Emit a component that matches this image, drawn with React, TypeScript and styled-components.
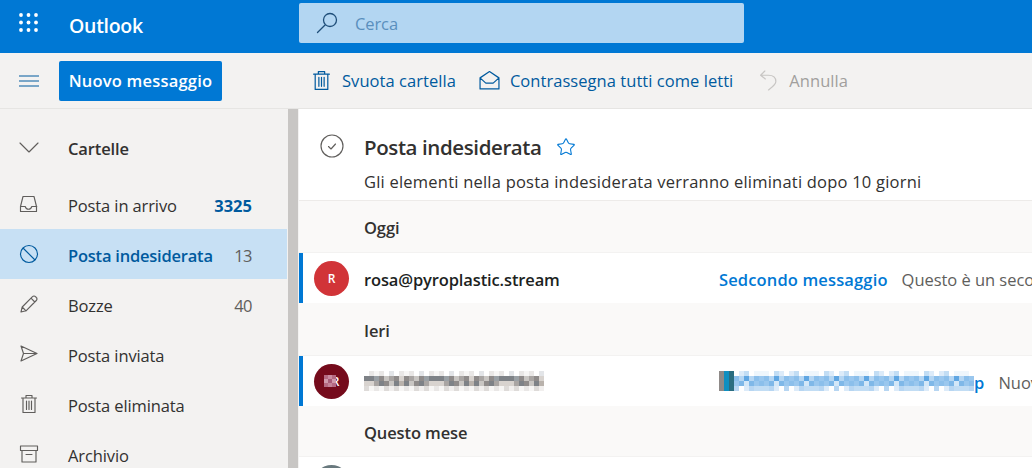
import React from "react";
import styled, { createGlobalStyle } from "styled-components";
import { Star } from "lucide-react";

const GlobalStyle = createGlobalStyle`
  html, body {
    margin: 0;
    padding: 0;
    width: 1032px;
    height: 468px;
    overflow: hidden;
    font-family: "Open Sans", "Liberation Sans", sans-serif;
  }
  * { box-sizing: border-box; }
`;

const Page = styled.div`
  width: 1032px;
  height: 468px;
  display: flex;
  flex-direction: column;
  overflow: hidden;
  background: #fff;
`;

const Header = styled.header`
  height: 53px;
  flex: none;
  background: #0078d4;
  display: flex;
  align-items: flex-start;
`;

const Waffle = styled.div`
  width: 69px;
  flex: none;
  padding: 13px 0 0 19px;
  svg { display: block; }
`;

const Brand = styled.div`
  width: 230px;
  flex: none;
  color: #fff;
  font-size: 19.5px;
  font-weight: 600;
  letter-spacing: -0.3px;
  line-height: 26px;
  padding-top: 13px;
`;

const Search = styled.div`
  width: 445px;
  height: 40px;
  margin-top: 3px;
  border-radius: 2px;
  background: #b3d6f2;
  display: flex;
  align-items: center;
  gap: 17px;
  padding-left: 17px;
  color: #5a8fbd;
  font-size: 16.5px;
  letter-spacing: -0.1px;
`;

const Toolbar = styled.div`
  height: 56px;
  flex: none;
  background: #f3f2f1;
  border-bottom: 1px solid #e6e5e3;
  display: flex;
  align-items: center;
`;

const ToolbarLeft = styled.div`
  width: 299px;
  flex: none;
  display: flex;
  align-items: center;
  padding-left: 19px;
  gap: 20px;
`;

const NewButton = styled.button`
  width: 163px;
  height: 40px;
  border: 0;
  border-radius: 2px;
  background: #0078d4;
  color: #fff;
  font: 600 16.5px "Open Sans", sans-serif;
  letter-spacing: 0.2px;
  padding: 0;
`;

const Actions = styled.div`
  display: flex;
  align-items: center;
  padding-left: 12px;
`;

const Action = styled.div<{ $disabled?: boolean; $gap?: number }>`
  display: flex;
  align-items: center;
  gap: 10px;
  margin-right: ${(p) => p.$gap ?? 0}px;
  font-size: 16.5px;
  letter-spacing: 0.05px;
  color: ${(p) => (p.$disabled ? "#a19f9d" : "#005a9e")};
  svg { color: ${(p) => (p.$disabled ? "#c8c6c4" : "#005a9e")}; }
`;

const Body = styled.div`
  flex: 1;
  min-height: 0;
  display: flex;
`;

const Sidebar = styled.nav`
  width: 287px;
  flex: none;
  background: #f3f2f1;
  padding-top: 14px;
`;

const Gutter = styled.div`
  width: 12px;
  flex: none;
  background: #f3f2f1;
  display: flex;
  padding-left: 1px;
`;

const Thumb = styled.div`
  width: 10px;
  background: #c8c6c4;
`;

const FolderRow = styled.div<{ $active?: boolean; $head?: boolean }>`
  height: ${(p) => (p.$head ? 56 : 50)}px;
  display: flex;
  align-items: center;
  padding: ${(p) => (p.$head ? "0 0 7px 19px" : "0 35px 0 19px")};
  background: ${(p) => (p.$active ? "#c7e0f4" : "transparent")};
  color: ${(p) => (p.$active ? "#005a9e" : "#323130")};
  font-size: 16.5px;
  font-weight: ${(p) => (p.$active || p.$head ? 600 : 400)};
  letter-spacing: ${(p) => (p.$active ? "-0.22px" : "-0.12px")};
`;

const FolderIcon = styled.span<{ $muted?: boolean }>`
  width: 49px;
  flex: none;
  display: flex;
  align-items: center;
  color: ${(p) => (p.$muted ? "#605e5c" : "inherit")};
  svg { display: block; }
`;

const FolderName = styled.span`
  flex: 1;
  white-space: nowrap;
  padding-top: 2px;
`;

const Count = styled.span<{ $strong?: boolean }>`
  padding-top: 2px;
  font-weight: ${(p) => (p.$strong ? 700 : 400)};
  color: ${(p) => (p.$strong ? "#005a9e" : "#605e5c")};
  letter-spacing: ${(p) => (p.$strong ? "0" : "-0.5px")};
`;

const Main = styled.main`
  flex: 1;
  min-width: 0;
  background: #fff;
  overflow: hidden;
`;

const ListHeader = styled.div`
  height: 92px;
  padding: 20px 0 0 21px;
  display: flex;
  gap: 20px;
  border-bottom: 1px solid #edebe9;
`;

const SelectAll = styled.span`
  padding-top: 5px;
  svg { display: block; }
`;

const TitleBlock = styled.div`
  display: flex;
  flex-direction: column;
`;

const TitleRow = styled.div`
  display: flex;
  align-items: center;
  gap: 14px;
  height: 36px;
  font-size: 20.5px;
  font-weight: 600;
  letter-spacing: -0.4px;
  color: #323130;
`;

const Notice = styled.div`
  font-size: 16.5px;
  letter-spacing: 0.22px;
  line-height: 20px;
  margin-top: 7px;
  color: #323130;
  white-space: nowrap;
`;

const DayBand = styled.div<{ $h: number }>`
  height: ${(p) => p.$h}px;
  background: #faf9f8;
  padding: 1px 0 0 65px;
  display: flex;
  align-items: center;
  font-size: 16.5px;
  font-weight: 600;
  letter-spacing: -0.12px;
  color: #323130;
`;

const MessageRow = styled.div<{ $unread?: boolean }>`
  height: 50px;
  display: flex;
  align-items: center;
  background: #fff;
  border-left: 4px solid ${(p) => (p.$unread ? "#0078d4" : "transparent")};
  box-shadow: 0 1px 0 #f3f2f1, 0 -1px 0 #f3f2f1;
  padding-left: 11px;
  white-space: nowrap;
`;

const Avatar = styled.div<{ $bg: string }>`
  width: 35px;
  height: 35px;
  flex: none;
  border-radius: 50%;
  background: ${(p) => p.$bg};
  color: #fff;
  font-size: 12px;
  font-weight: 600;
  display: flex;
  align-items: center;
  justify-content: center;
  svg { position: relative; z-index: 1; margin-right: -4px; }
`;

const Sender = styled.div`
  width: 370px;
  flex: none;
  padding: 2px 0 0 15px;
  font-size: 16.5px;
  font-weight: 600;
  letter-spacing: -0.13px;
  color: #201f1e;
  svg { display: block; margin-top: -2px; }
`;

const SubjectCell = styled.div`
  display: flex;
  align-items: center;
  margin-right: 14px;
  padding-top: 2px;
  font-size: 16.5px;
  font-weight: 600;
  letter-spacing: 0.14px;
  color: #0078d4;
  svg { display: block; margin-top: -2px; }
`;

const Preview = styled.span`
  padding-top: 2px;
  font-size: 16.5px;
  letter-spacing: -0.04px;
  color: #605e5c;
`;

const Line = ({ d, weight = 1.15 }: { d: string; weight?: number }) => (
  <path d={d} fill="none" stroke="currentColor" strokeWidth={weight} strokeLinejoin="round" strokeLinecap="round" />
);

const Icon = ({ d, size = 20 }: { d: string; size?: number }) => (
  <svg width={size} height={size} viewBox="0 0 20 20">
    <Line d={d} />
  </svg>
);

// pixelated censor block: rows of 5px cells picked from a palette by a fixed sequence
const Mosaic = ({ cols, rows, cell = 5, colors }: { cols: number; rows: string[][]; cell?: number; colors?: string[] }) => (
  <svg width={cols * cell} height={rows.length * cell} viewBox={`0 0 ${cols * cell} ${rows.length * cell}`}>
    {rows.map((palette, r) =>
      Array.from({ length: cols }, (_, c) => (
        <rect
          key={`${r}-${c}`}
          x={c * cell}
          y={r * cell}
          width={cell}
          height={cell}
          fill={(colors && colors[c]) || palette[(c * 7 + r * 3 + ((c * c) >> 1)) % palette.length]}
        />
      ))
    )}
  </svg>
);

const senderEdge = ["#ffffff", "#e9e7e6", "#f1efee", "#dedbd9", "#f7f6f5", "#e3e5e8"];
const senderCore = ["#8f8b8a", "#a9a5a3", "#b9b2ac", "#7e8287", "#c9c6c3", "#9aa0a5", "#d8d3cf"];
const subjectEdge = ["#ffffff", "#dcebf9", "#c2ddf4", "#eef6fc", "#b7d6f2"];
const subjectCore = ["#7fb8e8", "#9ac7ee", "#5fa6e2", "#b5d6f3", "#8bbfeb", "#d3e7f8"];

const paths = {
  inbox: "M1.5 12.5 4 2.5h11l2.5 10v5H1.5zM1.5 12.5h4.7c.5 2 1.9 2.7 3.3 2.7s2.8-.7 3.3-2.7h5",
  ban: "M10 1.5a8.5 8.5 0 1 0 0 17 8.5 8.5 0 0 0 0-17zM4 4l12 12",
  pencil: "M2 18l1.2-5L13.5 2.7a2 2 0 0 1 3 0l.8.8a2 2 0 0 1 0 3L7 16.8zM3.2 13 7 16.8M12 4.2l3.8 3.8",
  send: "M2 2l16 7.5L2 17l2.5-7.5zM4.5 9.5H18",
  trash: "M2.5 4h15M7 4V1.5h6V4M4 4v14.5h12V4M7.5 7v8.5M10 7v8.5M12.5 7v8.5",
  archive: "M1.5 2h17v4.5h-17zM3 6.5V18h14V6.5M7 10.5h6",
  mail: "M1 7.5 10 1.5l9 6V18H1zM1 7.5l5.5 5h7l5.5-5",
  undo: "M6.5 1 2.5 5l4.5 3.5M2.5 5h7.5c4.5 0 7 2.5 7 6 0 3-3 5-7 8",
};

const folders = [
  { name: "Posta in arrivo", icon: paths.inbox, count: "3325", strong: true },
  { name: "Posta indesiderata", icon: paths.ban, count: "13", active: true },
  { name: "Bozze", icon: paths.pencil, count: "40" },
  { name: "Posta inviata", icon: paths.send },
  { name: "Posta eliminata", icon: paths.trash },
  { name: "Archivio", icon: paths.archive },
];

export default function App() {
  return (
    <Page>
      <GlobalStyle />
      <Header>
        <Waffle>
          <svg width="19" height="19" viewBox="0 0 19 19" fill="#fff">
            {[2, 9.5, 17].flatMap((y) =>
              [2, 9.5, 17].map((x) => <circle key={`${x}-${y}`} cx={x} cy={y} r="1.9" />)
            )}
          </svg>
        </Waffle>
        <Brand>Outlook</Brand>
        <Search>
          <svg width="22" height="22" viewBox="0 0 22 22" style={{ color: "#1f4e79" }}>
            <Line d="M14 1.5a6.5 6.5 0 1 0 0 13 6.5 6.5 0 0 0 0-13zM9.3 12.7 1.5 20.5" weight={1.3} />
          </svg>
          Cerca
        </Search>
      </Header>
      <Toolbar>
        <ToolbarLeft>
          <svg width="20" height="12" viewBox="0 0 20 12" style={{ color: "#005a9e" }}>
            <Line d="M0 1h20M0 6h20M0 11h20" weight={1} />
          </svg>
          <NewButton>Nuovo messaggio</NewButton>
        </ToolbarLeft>
        <Actions>
          <Action $gap={23}>
            <Icon d={paths.trash} size={21} />
            Svuota cartella
          </Action>
          <Action $gap={25}>
            <Icon d={paths.mail} size={21} />
            Contrassegna tutti come letti
          </Action>
          <Action $disabled>
            <Icon d={paths.undo} size={21} />
            Annulla
          </Action>
        </Actions>
      </Toolbar>
      <Body>
        <Sidebar>
          <FolderRow $head>
            <FolderIcon $muted>
              <Icon d="M1 5l9 9 9-9" />
            </FolderIcon>
            <FolderName>Cartelle</FolderName>
          </FolderRow>
          {folders.map((f) => (
            <FolderRow key={f.name} $active={f.active}>
              <FolderIcon $muted={!f.active}>
                <Icon d={f.icon} />
              </FolderIcon>
              <FolderName>{f.name}</FolderName>
              {f.count && <Count $strong={f.strong}>{f.count}</Count>}
            </FolderRow>
          ))}
        </Sidebar>
        <Gutter>
          <Thumb />
        </Gutter>
        <Main>
          <ListHeader>
            <SelectAll>
              <svg width="24" height="24" viewBox="0 0 24 24" style={{ color: "#605e5c" }}>
                <Line d="M12 1a11 11 0 1 0 0 22 11 11 0 0 0 0-22zM8.5 12.5l2.5 2.5 4.5-5" />
              </svg>
            </SelectAll>
            <TitleBlock>
              <TitleRow>
                Posta indesiderata
                <Star size={20} color="#0078d4" strokeWidth={1.3} />
              </TitleRow>
              <Notice>Gli elementi nella posta indesiderata verranno eliminati dopo 10 giorni</Notice>
            </TitleBlock>
          </ListHeader>
          <DayBand $h={52}>Oggi</DayBand>
          <MessageRow $unread>
            <Avatar $bg="#d13438">R</Avatar>
            <Sender>rosa@pyroplastic.stream</Sender>
            <SubjectCell>Sedcondo messaggio</SubjectCell>
            <Preview>Questo è un secondo messaggio di prova</Preview>
          </MessageRow>
          <DayBand $h={53}>Ieri</DayBand>
          <MessageRow $unread>
            <Avatar $bg="#750b1c">
              <Mosaic cols={3} cell={4} rows={[["#b56a82", "#c98ba0"], ["#a85c78", "#d09aab"], ["#b56a82", "#c48498"]]} />
              R
            </Avatar>
            <Sender>
              <Mosaic cols={36} rows={[senderEdge, senderCore, senderCore, senderEdge]} />
            </Sender>
            <SubjectCell>
              <Mosaic
                cols={51}
                rows={[subjectEdge, subjectCore, subjectCore, subjectEdge]}
                colors={["#8f8a88", "#0f8fc0", "#2a6d80"]}
              />
              p
            </SubjectCell>
            <Preview>Nuovo messaggio</Preview>
          </MessageRow>
          <DayBand $h={51}>Questo mese</DayBand>
          <MessageRow>
            <Avatar $bg="#69797e" />
          </MessageRow>
        </Main>
      </Body>
    </Page>
  );
}
